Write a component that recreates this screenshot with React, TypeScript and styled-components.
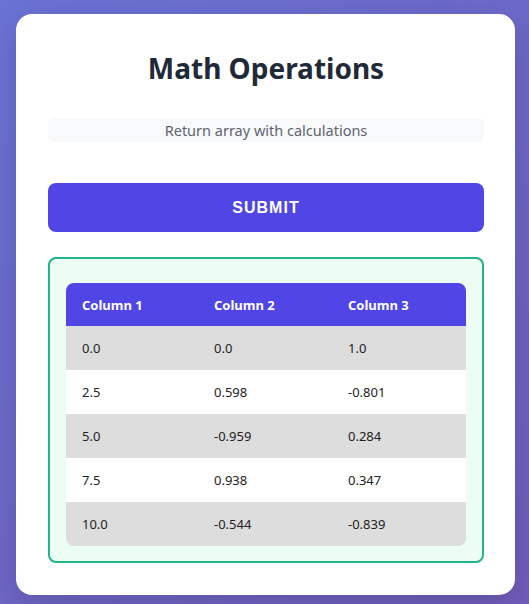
import { createGlobalStyle, styled } from "styled-components";

const GlobalStyle = createGlobalStyle`
    html, body {
        margin: 0;
        padding: 0;
    }
    body {
        min-height: 604px;
        background: linear-gradient(135deg, #6a72d4 0%, #6f5db9 100%);
        font-family: "Noto Sans", "Open Sans", sans-serif;
    }
`;

const Page = styled.div`
    padding: 14px 14px 10px 16px;
`;

const Card = styled.div`
    background: #ffffff;
    border-radius: 16px;
    padding: 30px 31px 32px 32px;
    box-shadow: 0 10px 30px rgba(0, 0, 0, 0.15);
`;

const Title = styled.h1`
    margin: 0 0 26px;
    text-align: center;
    font-size: 28px;
    line-height: 48px;
    font-weight: 700;
    color: #1f2937;
`;

const Description = styled.p`
    margin: 0 0 41px;
    padding: 2px 0;
    background: #f8f9fb;
    border-radius: 6px;
    text-align: center;
    font-size: 14.5px;
    line-height: 20px;
    color: #5f6470;
`;

const SubmitButton = styled.button`
    display: block;
    width: 100%;
    height: 49px;
    border: none;
    border-radius: 8px;
    background: #4f46e5;
    color: #ffffff;
    font-family: "Liberation Sans", Arial, sans-serif;
    font-size: 16px;
    font-weight: 700;
    letter-spacing: 1px;
    margin-bottom: 25px;
`;

const ResultBox = styled.div`
    border: 2px solid #22b38a;
    border-radius: 8px;
    background: #ecfdf3;
    padding: 24px 16px 15px;
`;

const Table = styled.div`
    display: grid;
    grid-template-columns: 132px 134px 1fr;
    border-radius: 8px;
    overflow: hidden;
    font-size: 13px;
    line-height: 16px;
`;

const HeadCell = styled.div`
    background: #4f46e5;
    color: #ffffff;
    font-weight: 700;
    padding: 14px 16px 13px;
`;

type CellProps = {
    $shaded: boolean;
};

const Cell = styled.div<CellProps>`
    background: ${({ $shaded }) => ($shaded ? "#dddddd" : "#ffffff")};
    color: #222222;
    padding: 14px 16px;
`;

const rows = [
    ["0.0", "0.0", "1.0"],
    ["2.5", "0.598", "-0.801"],
    ["5.0", "-0.959", "0.284"],
    ["7.5", "0.938", "0.347"],
    ["10.0", "-0.544", "-0.839"],
];

const App = () => {
    return (
        <Page>
            <GlobalStyle />
            <Card>
                <Title>Math Operations</Title>
                <Description>Return array with calculations</Description>
                <SubmitButton>SUBMIT</SubmitButton>
                <ResultBox>
                    <Table>
                        <HeadCell>Column 1</HeadCell>
                        <HeadCell>Column 2</HeadCell>
                        <HeadCell>Column 3</HeadCell>
                        {rows.map((row, i) =>
                            row.map((value, j) => (
                                <Cell key={`${i}-${j}`} $shaded={i % 2 === 0}>
                                    {value}
                                </Cell>
                            ))
                        )}
                    </Table>
                </ResultBox>
            </Card>
        </Page>
    );
};

export default App;
